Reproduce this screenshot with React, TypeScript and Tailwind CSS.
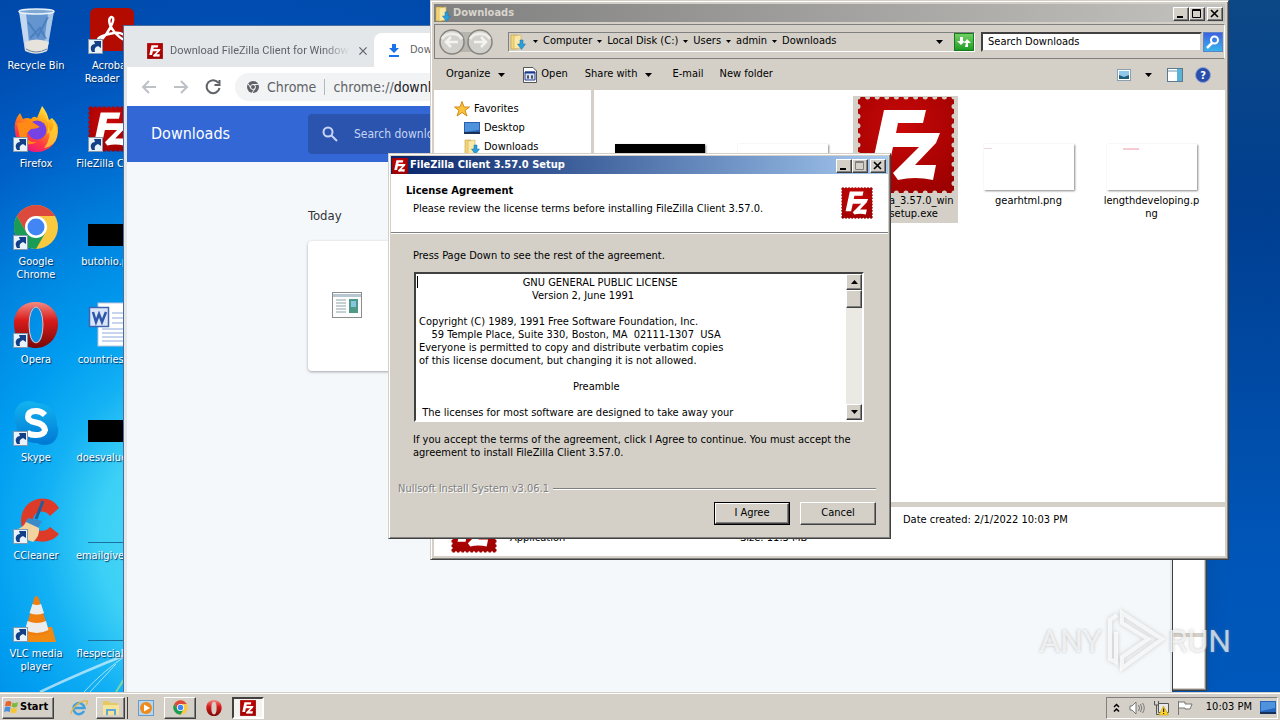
import React, { FC, ReactNode } from 'react';

const raised =
  'border border-t-white border-l-white border-r-[#404040] border-b-[#404040] shadow-[inset_-1px_-1px_0_#808080] bg-[#d4d0c8]';
const frame =
  'border border-t-[#d4d0c8] border-l-[#d4d0c8] border-r-[#404040] border-b-[#404040] shadow-[inset_1px_1px_0_#ffffff,inset_-1px_-1px_0_#808080] bg-[#d4d0c8]';

const FzIcon: FC<{ className: string }> = ({ className }) => (
  <svg viewBox="0 0 98 98" className={className}>
    <defs>
      <radialGradient id="fz" cx="0.45" cy="0.3" r="0.8">
        <stop offset="0" stopColor="#c90808" />
        <stop offset="1" stopColor="#9c0000" />
      </radialGradient>
    </defs>
    <rect x="1" y="1" width="96" height="96" fill="url(#fz)" />
    <rect x="1" y="1" width="96" height="96" fill="none" stroke="currentColor" strokeWidth="5" strokeLinecap="round" strokeDasharray="0 9.600" />
    <path
      d="M27 14H69L66 27H41L39 37H83L79 47L58 69H79L76 84Q58 80 41 84L36 77L62 51H36L31 74H14Z"
      fill="#fff"
    />
  </svg>
);

const ShortcutArrow: FC = () => (
  <svg viewBox="0 0 15 15" className="absolute bottom-0 left-0 size-[15px]">
    <rect x="0.5" y="0.5" width="14" height="14" fill="#e8f2fb" stroke="#8398ad" />
    <path d="M4 13C1 8 4 5 7 5L6 2L13 2V9L10 7C7 8 6 10 7 13Z" fill="#123f85" />
  </svg>
);

const RecycleBin: FC = () => (
  <svg viewBox="0 0 46 46" className="size-[46px]">
    <path d="M6 3L12 43Q23 49 34 43L41 3Z" fill="#a9c7e6" fillOpacity="0.6" />
    <path d="M6 3L12 43L17 44L13 5Z" fill="#dbe9f7" fillOpacity="0.8" />
    <path d="M41 3L34 43L30 44L35 5Z" fill="#dbe9f7" fillOpacity="0.6" />
    <path d="M15 14L25 28L35 9M17 30L27 20L33 31" stroke="#3e78b8" strokeWidth="2" fill="none" opacity="0.7" />
    <path d="M12 34Q23 29 36 34L34 43Q23 48 13 43Z" fill="#e6e3dc" />
    <path d="M13 41Q23 47 34 41" stroke="#6c86a3" fill="none" />
    <ellipse cx="23.500" cy="3.500" rx="17.500" ry="2.500" fill="#7fa8d3" stroke="#e8f1fa" strokeWidth="1.500" />
  </svg>
);

const AcrobatIcon: FC = () => (
  <svg viewBox="0 0 46 46" className="size-[46px]">
    <rect x="2" width="44" height="43" rx="6" fill="#b30b00" />
    <path
      d="M11 32C7 30 18 26 26 25S39 28 38 31S27 27 23 19S23 7 25 10S19 26 15 30S10 34 11 32Z"
      fill="none"
      stroke="#fff"
      strokeWidth="2.500"
    />
  </svg>
);

const FirefoxIcon: FC = () => (
  <svg viewBox="0 0 46 46" className="size-[46px]">
    <defs>
      <linearGradient id="ff" x1="0.8" y1="0" x2="0.3" y2="1">
        <stop offset="0" stopColor="#fff44f" />
        <stop offset="0.4" stopColor="#ff980e" />
        <stop offset="0.75" stopColor="#ff3647" />
        <stop offset="1" stopColor="#e31587" />
      </linearGradient>
    </defs>
    <path
      d="M2 25C1 17 3 12 7 7L10 13Q14 11 18 13Q21 9 24 12Q26 7 29 0Q34 6 36 14L39 12Q46 18 45 26C44 38 35 46 24 46S3 38 2 25Z"
      fill="url(#ff)"
    />
    <circle cx="24" cy="24" r="9.500" fill="#7542e5" />
    <path d="M4 17Q11 17 16 14L27 21Q23 23 18 23L14 27Q12 37 24 36Q12 42 7 32Z" fill="#ff8a16" />
    <path d="M29 0Q39 14 34 28Q44 22 39 12Q46 22 44 31Q42 40 31 42Q39 32 36 19Z" fill="#ffd83d" opacity="0.75" />
  </svg>
);

const ChromeIcon: FC<{ className: string }> = ({ className }) => (
  <svg viewBox="0 0 46 46" className={className}>
    <circle cx="23" cy="23" r="22" fill="#f9c940" />
    <path d="M3.900 12A22 22 0 0 1 42 12H23L13.500 28.500Z" fill="#dc4a3d" />
    <path d="M3.900 12A22 22 0 0 0 23 45L32.500 28.500H13.500Z" fill="#1a9c56" />
    <circle cx="23" cy="23" r="11" fill="#fff" />
    <circle cx="23" cy="23" r="8.500" fill="#4285f4" />
  </svg>
);

const OperaIcon: FC<{ className: string }> = ({ className }) => (
  <svg viewBox="0 0 46 46" className={className}>
    <defs>
      <linearGradient id="op" x1="0" y1="0" x2="0" y2="1">
        <stop offset="0" stopColor="#f28b82" />
        <stop offset="0.4" stopColor="#d81c1c" />
        <stop offset="1" stopColor="#7a0606" />
      </linearGradient>
    </defs>
    <path d="M23 0C36 0 45 9 45 22S36 46 23 46S1 36 1 22S10 0 23 0ZM23 5C17 5 16 13 16 23S17 41 23 41S30 33 30 23S29 5 23 5Z" fill="url(#op)" fillRule="evenodd" />
    <ellipse cx="23" cy="23" rx="7" ry="18" fill="none" stroke="#f5b8b0" />
  </svg>
);

const SkypeIcon: FC = () => (
  <svg viewBox="0 0 46 46" className="size-[46px]">
    <defs>
      <linearGradient id="sk" x1="0" y1="0" x2="0" y2="1">
        <stop offset="0" stopColor="#12b4f0" />
        <stop offset="1" stopColor="#0078d4" />
      </linearGradient>
    </defs>
    <path d="M15 1Q20 1 24 3Q44 5 44 25Q46 29 45 33Q43 45 31 45Q27 45 24 43Q4 43 3 24Q0 18 2 11Q6 1 15 1Z" fill="url(#sk)" />
    <path d="M32 15Q28 11 23 11Q15 11 15 17Q15 21 23 22.500T32 30Q31 35 23 35T14 31" stroke="#fff" strokeWidth="6" fill="none" />
  </svg>
);

const CCleanerIcon: FC = () => (
  <svg viewBox="0 0 46 46" className="size-[46px]">
    <path d="M46 10L37 18C31 10 20 13 20 23S31 36 37 29L46 36C36 49 8 46 8 23S36 -7 46 10Z" fill="#dd3b28" />
    <path d="M30 3L23 21" stroke="#1e5f9c" strokeWidth="3" />
    <path d="M15 20L29 23L25 30L12 25Z" fill="#3a8ac8" />
    <path d="M13 24L26 30Q27 38 20 44Q8 40 2 32Q10 30 13 24Z" fill="#f2d3a0" />
  </svg>
);

const VlcIcon: FC = () => (
  <svg viewBox="0 0 46 46" className="size-[46px]">
    <path d="M8 31H39L43 46H8Z" fill="#f08a12" />
    <path d="M23 0Q25 0 26 3L36 36Q23 43 12 36L21 3Q22 0 23 0Z" fill="#f07f10" />
    <path d="M19.500 8Q24 10 28 8L31 17Q24 20 16.500 17Z" fill="#ececec" />
    <path d="M14.500 25Q24 29 33 25L35.500 34Q24 40 12 34Z" fill="#ececec" />
  </svg>
);

const WordIcon: FC = () => (
  <svg viewBox="0 0 46 46" className="size-[46px]">
    <rect x="10" y="1" width="34" height="43" fill="#fff" stroke="#b9c6dd" />
    <path d="M24 11H42M24 16H42M24 21H42M14 27H42M14 31H42M14 35H42M14 39H42" stroke="#8fa9dc" />
    <rect x="1.500" y="5.500" width="19" height="19" fill="#dbe6f8" stroke="#3e66b0" strokeWidth="1.500" />
    <path d="M5 10L8 20L11 12L14 20L18 10" stroke="#2b58aa" strokeWidth="2.500" fill="none" />
  </svg>
);

const BlackThumb: FC = () => <div className="mb-1 h-[22px] w-[46px] bg-black" />;
const LineThumb: FC = () => <div className="mb-px h-px w-[46px] bg-[#1d6f9c]" />;

const desktopItems: { label: string; icon: ReactNode; shortcut?: boolean }[] = [
  { label: 'Recycle Bin', icon: <RecycleBin /> },
  { label: 'Firefox', icon: <FirefoxIcon />, shortcut: true },
  { label: 'Google Chrome', icon: <ChromeIcon className="size-[46px]" />, shortcut: true },
  { label: 'Opera', icon: <OperaIcon className="size-[46px]" />, shortcut: true },
  { label: 'Skype', icon: <SkypeIcon />, shortcut: true },
  { label: 'CCleaner', icon: <CCleanerIcon />, shortcut: true },
  { label: 'VLC media player', icon: <VlcIcon />, shortcut: true },
  { label: 'Acrobat Reader DC', icon: <AcrobatIcon />, shortcut: true },
  { label: 'FileZilla Client', icon: <FzIcon className="size-[46px] text-[#0a55bb]" />, shortcut: true },
  { label: 'butohio.png', icon: <BlackThumb /> },
  { label: 'countrieso.rtf', icon: <WordIcon /> },
  { label: 'doesvalue.jpg', icon: <BlackThumb /> },
  { label: 'emailgive.png', icon: <LineThumb /> },
  { label: 'flespecial.png', icon: <LineThumb /> }
];

const Desktop: FC = () => (
  <ul className="absolute top-2 left-0 grid grid-flow-col grid-cols-[72px_78px] grid-rows-[repeat(7,98px)] text-center text-white">
    {desktopItems.map((item) => (
      <li key={item.label} className="flex flex-col items-center px-1">
        <div className="relative flex h-[46px] w-[46px] items-end">
          {item.icon}
          {item.shortcut && <ShortcutArrow />}
        </div>
        <span className="mt-[5px] leading-[13px] [text-shadow:1px_1px_1px_#003060]">{item.label}</span>
      </li>
    ))}
  </ul>
);

const Arrow: FC<{ d: string; className?: string }> = ({ d, className = 'size-5 text-[#5f6368]' }) => (
  <svg viewBox="0 0 20 20" className={className} fill="none" stroke="currentColor" strokeWidth="2">
    <path d={d} />
  </svg>
);

const ChromeWindow: FC = () => (
  <section className="absolute top-[25px] bottom-0 left-[123px] flex w-[1050px] flex-col border-t border-r border-l border-[#4a6f9f] border-r-[#404040] bg-[#e4e7ea] pr-[2px] pl-[3px] text-[#5f6368]">
    <div className="flex h-[41px] items-end">
      <div className="flex h-8 w-[247px] items-center gap-[7px] pl-5">
        <FzIcon className="size-4 shrink-0 text-[#a00]" />
        <span className="w-[180px] font-[Roboto] whitespace-nowrap [mask-image:linear-gradient(90deg,#000_85%,transparent)]">
          Download FileZilla Client for Windows
        </span>
        <button aria-label="Close tab">
          <Arrow d="M4 4L16 16M16 4L4 16" className="size-3 text-[#5f6368]" />
        </button>
      </div>
      <div className="flex h-[34px] w-60 items-center gap-2 rounded-t-lg bg-white pl-3">
        <svg viewBox="0 0 16 16" className="size-4">
          <path d="M6 2H10V6H13L8 11L3 6H6ZM3 13H13V15H3Z" fill="#1a73e8" />
        </svg>
        <span>Downloads</span>
      </div>
    </div>
    <div className="flex h-[39px] items-center bg-white pl-3">
      <button aria-label="Back" className="mr-3">
        <Arrow d="M17 10H4M10 4L4 10L10 16" className="size-5 text-[#bdc1c6]" />
      </button>
      <button aria-label="Forward" className="mr-3">
        <Arrow d="M3 10H16M10 4L16 10L10 16" className="size-5 text-[#bdc1c6]" />
      </button>
      <button aria-label="Reload" className="mr-3">
        <Arrow d="M15.500 6A6.500 6.500 0 1 0 16.500 11M16.500 3V8H11.500" />
      </button>
      <div className="flex h-7 flex-1 items-center rounded-full bg-[#f1f3f4] pl-3 text-sm">
        <svg viewBox="0 0 24 24" className="mr-2 size-3">
          <circle cx="12" cy="12" r="12" fill="#5f6368" />
          <circle cx="12" cy="12" r="5" fill="none" stroke="#f1f3f4" strokeWidth="2" />
          <path d="M12 7H23M8 15L2 5M16 15L10 24" stroke="#f1f3f4" strokeWidth="2" />
        </svg>
        <span>Chrome</span>
        <span className="mx-2 h-4 w-px bg-[#b4b8bc]" />
        <span>
          chrome://<span className="text-[#202124]">downloads</span>
        </span>
      </div>
    </div>
    <header className="flex h-14 items-center bg-[#3367d6] pl-6 text-white">
      <h1 className="w-[157px] text-base font-normal">Downloads</h1>
      <label className="flex h-10 flex-1 items-center gap-[14px] rounded-sm bg-[#2a54ae] pl-3">
        <svg viewBox="0 0 20 20" className="size-5" fill="none" stroke="#c7d5f3" strokeWidth="2">
          <circle cx="8" cy="8" r="4.500" />
          <path d="M11.500 11.500L17 17" />
        </svg>
        <input aria-label="Search downloads" placeholder="Search downloads" className="bg-transparent text-xs outline-none placeholder:text-[#c7d5f3]" />
      </label>
    </header>
    <main className="flex-1 bg-[#f5f8fb] pt-[45px] pl-[181px]">
      <h2 className="text-[13px] leading-[18px] font-normal text-[#303438]">Today</h2>
      <div className="mt-4 h-[130px] w-[680px] rounded-sm bg-white pt-[51px] pl-6 shadow-[0_1px_3px_#a0a5aa]">
        <svg viewBox="0 0 30 26" className="h-[26px] w-[30px]">
          <rect x="0.500" y="0.500" width="29" height="25" fill="#fdfdfd" stroke="#8c8c8c" />
          <path d="M1 3.500H29" stroke="#b8c7cf" strokeWidth="3" />
          <path d="M4 8H14M4 11H14M4 14H14M4 17H14M4 20H14" stroke="#8da2a8" />
          <rect x="17" y="7" width="9" height="14" fill="#4e9a86" />
          <path d="M19 9H24V15H19Z" fill="#88c5e3" />
        </svg>
      </div>
    </main>
  </section>
);

const WindowButtons: FC<{ disabled?: boolean }> = ({ disabled }) => (
  <div className="ml-auto flex pr-[2px]">
    <button aria-label="Minimize" className={`h-[14px] w-4 ${raised}`}>
      <svg viewBox="0 0 14 12" className="h-3 w-[14px]"><path d="M3 8H9V10H3Z" /></svg>
    </button>
    <button aria-label="Maximize" disabled={disabled} className={`mr-[2px] h-[14px] w-4 ${raised}`}>
      <svg viewBox="0 0 14 12" className="h-3 w-[14px]" fill="none" stroke={disabled ? '#808080' : '#000'}>
        <path d="M2.500 1.500H10.500V9.500H2.500ZM2.500 2.500H10.500" />
      </svg>
    </button>
    <button aria-label="Close" className={`h-[14px] w-4 ${raised}`}>
      <svg viewBox="0 0 14 12" className="h-3 w-[14px]" stroke="#000" strokeWidth="1.600">
        <path d="M3 2L10 9M10 2L3 9" />
      </svg>
    </button>
  </div>
);

const FolderIcon: FC<{ className?: string }> = ({ className = 'size-4' }) => (
  <svg viewBox="0 0 16 16" className={className}>
    <path d="M1 1H7V15H1Z" fill="#f3d67a" stroke="#c39b3a" strokeWidth="0.600" />
    <path d="M4 2L11 1V14L4 15Z" fill="#fae9a6" stroke="#cfae55" strokeWidth="0.600" />
    <path d="M10 6H13V10H15.500L11.500 15.500L7.500 10H10Z" fill="#2b9fd9" stroke="#1773ab" strokeWidth="0.500" />
  </svg>
);

const Caret: FC = () => (
  <svg viewBox="0 0 7 4" className="h-1 w-[7px]"><path d="M0 0H7L3.500 4Z" /></svg>
);

const crumbs = ['Computer', 'Local Disk (C:)', 'Users', 'admin', 'Downloads'];

const files: { name: string; icon: ReactNode; selected?: boolean }[] = [
  { name: '', icon: <div className="mb-1 h-[46px] w-[90px] bg-black shadow-[1px_1px_2px_#888]" /> },
  { name: '', icon: <div className="mb-1 h-[46px] w-[90px] bg-white shadow-[1px_1px_2px_#888]" /> },
  { name: 'FileZilla_3.57.0_win\n64-setup.exe', icon: <FzIcon className="size-[98px] text-[#d4d0c8]" />, selected: true },
  {
    name: 'gearhtml.png',
    icon: <div className="mb-1 h-[46px] w-[90px] bg-white pt-1 shadow-[1px_1px_2px_#888]"><div className="h-px w-2 bg-[#f2d5d8]" /></div>
  },
  {
    name: 'lengthdeveloping.p\nng',
    icon: <div className="mb-1 h-[46px] w-[90px] bg-white pt-1 pl-4 shadow-[1px_1px_2px_#888]"><div className="h-[2px] w-4 bg-[#f4ccd2]" /></div>
  }
];

const ExplorerWindow: FC = () => (
  <section className={`absolute top-0 left-[430px] flex h-[560px] w-[799px] flex-col p-[3px] ${frame}`}>
    <div className="flex h-[18px] shrink-0 items-center gap-[2px] bg-linear-to-r from-[#808080] to-[#c4c2be] pt-px pl-px font-bold text-[#d8d4cc]">
      <FolderIcon />
      <span>Downloads</span>
      <WindowButtons />
    </div>
    <nav className="mt-[2px] flex h-[35px] shrink-0 items-center border border-t-[#808080] border-r-white border-b-[#808080] border-l-[#808080] pr-px pl-[3px]">
      <svg viewBox="0 0 56 28" className="h-7 w-14">
        <path d="M14 4H42V24H14Z" fill="#b8b5ae" />
        {[14, 42].map((cx) => (
          <circle key={cx} cx={cx} cy="14" r="12" fill="#d2d0cb" stroke="#868480" strokeWidth="1.500" />
        ))}
        <path d="M4 11A11 9 0 0 1 24 11M32 11A11 9 0 0 1 52 11" stroke="#eeede9" strokeWidth="3" fill="none" />
        <path d="M20 14H9M13 9L8 14L13 19M36 14H47M43 9L48 14L43 19" stroke="#f4f3f0" strokeWidth="2.500" fill="none" />
      </svg>
      <div className="ml-[14px] flex h-5 flex-1 items-center border border-t-[#808080] border-r-white border-b-white border-l-[#808080] pl-px">
        <FolderIcon />
        <ol className="flex pl-[2px]">
          {crumbs.map((crumb) => (
            <li key={crumb} className="flex items-center">
              <span className="mx-[5px]"><svg viewBox="0 0 5 3" className="h-[3px] w-[5px]"><path d="M0 0H5L2.500 3Z" /></svg></span>
              <button>{crumb}</button>
            </li>
          ))}
        </ol>
        <button aria-label="Previous locations" className="mr-[11px] ml-auto"><Caret /></button>
        <button aria-label="Refresh" className="grid h-[18px] w-5 place-items-center border border-[#187a1c] bg-linear-to-b from-[#6fcf62] to-[#1b9d24]">
          <svg viewBox="0 0 18 16" className="h-4 w-[18px]" fill="#fff">
            <path d="M5 3H8V7H10L6 11L2 7H5ZM10 13H13V9H16L12 5L9 9H11Z" />
          </svg>
        </button>
      </div>
      <input
        aria-label="Search Downloads"
        placeholder="Search Downloads"
        className="ml-[6px] h-5 w-[221px] border-2 border-t-[#404040] border-r-[#d4d0c8] border-b-[#d4d0c8] border-l-[#404040] bg-white pl-[5px] outline-none placeholder:text-black"
      />
      <button aria-label="Search" className="ml-px grid size-5 place-items-center border border-[#5c82c8] bg-linear-to-b from-[#3f5fe0] to-[#37b3ec]">
        <svg viewBox="0 0 16 16" className="size-4" fill="none" stroke="#fff" strokeWidth="2">
          <circle cx="9.500" cy="6" r="3.500" />
          <path d="M7 9L2 14" strokeWidth="2.500" />
        </svg>
      </button>
    </nav>
    <div className="flex h-[31px] shrink-0 items-center pr-[14px] pl-3">
      <button className="mr-[18px] flex items-center gap-2">Organize <Caret /></button>
      <button className="mr-[17px] flex items-center gap-1">
        <svg viewBox="0 0 14 16" className="h-4 w-[14px]">
          <path d="M0.500 0.500H10L13.500 4V15.500H0.500Z" fill="#fff" stroke="#555" />
          <path d="M2 5H12V13H2Z" fill="#d8e2f8" stroke="#1d3a8a" strokeWidth="1" />
          <path d="M2 5.500H12" stroke="#1d3a8a" strokeWidth="2" />
          <path d="M4 10H6M8 10H10M5 8V12M9 8V12" stroke="#222" />
        </svg>
        Open
      </button>
      <button className="mr-5 flex items-center gap-2">Share with <Caret /></button>
      <button className="mr-4">E-mail</button>
      <button>New folder</button>
      <button aria-label="Change view" className="ml-auto flex items-center gap-[14px]">
        <svg viewBox="0 0 14 12" className="h-3 w-[14px]">
          <rect x="0.500" y="0.500" width="13" height="11" fill="#fff" stroke="#8aa0b0" />
          <path d="M2 2H12V10H2Z" fill="#8fc8ea" />
          <path d="M2 6L7 8L12 6V10H2Z" fill="#205d78" />
        </svg>
        <Caret />
      </button>
      <button aria-label="Show the preview pane" className="ml-[15px]">
        <svg viewBox="0 0 16 14" className="h-[14px] w-4">
          <rect x="0.500" y="0.500" width="15" height="13" fill="#fff" stroke="#5b7a90" />
          <path d="M1 3H15" stroke="#9db7c8" strokeWidth="1.500" />
          <rect x="10" y="1" width="5" height="12" fill="#59b3d8" />
        </svg>
      </button>
      <button aria-label="Get help" className="ml-3 grid size-4 place-items-center rounded-full border border-[#8fa5d8] bg-[#2a4fa8] font-bold text-white">
        ?
      </button>
    </div>
    <div className="flex min-h-0 flex-1">
      <ul className="w-[157px] shrink-0 bg-white pt-[9px] pl-5 leading-[19px]">
        <li className="flex items-center gap-1">
          <svg viewBox="0 0 16 16" className="size-4">
            <path d="M8 0.500L10 6H15.500L11 9.500L13 15L8 11.500L3 15L5 9.500L0.500 6H6Z" fill="#fbc23c" stroke="#d38a18" />
          </svg>
          Favorites
        </li>
        <li className="flex items-center gap-1 pl-[10px]">
          <svg viewBox="0 0 16 12" className="h-3 w-4">
            <rect width="16" height="12" fill="#2b5fae" />
            <path d="M1 1H15V8L1 10Z" fill="#4d92dd" />
            <path d="M0 10H16V12H0Z" fill="#1d3158" />
          </svg>
          Desktop
        </li>
        <li className="flex items-center gap-1 pl-[10px]"><FolderIcon /> Downloads</li>
      </ul>
      <ul className="ml-[3px] grid flex-1 auto-rows-min grid-cols-[repeat(auto-fill,123px)] bg-white pt-[6px] pl-1">
        {files.map((file, i) => (
          <li key={i} className={`mx-[9px] flex flex-col items-center ${file.selected ? 'bg-[#d4d0c8]' : ''}`}>
            <div className="flex h-[98px] items-end">{file.icon}</div>
            <span className="h-[29px] text-center leading-[13px] whitespace-pre">{file.name}</span>
          </li>
        ))}
      </ul>
    </div>
    <footer className="mt-[5px] flex h-[49px] shrink-0 bg-white pl-[17px]">
      <FzIcon className="size-[46px] text-white" />
      <dl className="grid flex-1 grid-cols-[230px_163px_1fr] content-start pt-1 pl-[13px] leading-[18px]">
        <dd className="col-start-3">Date created: 2/1/2022 10:03 PM</dd>
        <dd className="col-start-1">Application</dd>
        <dd>Size: 11.3 MB</dd>
      </dl>
    </footer>
  </section>
);

const license = `${' '.repeat(33)}GNU GENERAL PUBLIC LICENSE
${' '.repeat(36)}Version 2, June 1991

Copyright (C) 1989, 1991 Free Software Foundation, Inc.
    59 Temple Place, Suite 330, Boston, MA  02111-1307  USA
Everyone is permitted to copy and distribute verbatim copies
of this license document, but changing it is not allowed.

${' '.repeat(49)}Preamble

 The licenses for most software are designed to take away your
freedom to share and change it.  By contrast, the GNU General Public`;

const SetupDialog: FC = () => (
  <section className={`absolute top-[153px] left-[388px] flex h-[386px] w-[503px] flex-col p-[2px] ${frame}`}>
    <div className="flex h-[18px] shrink-0 items-center gap-[2px] bg-linear-to-r from-[#0a246a] to-[#a6caf0] pt-px pl-px font-bold text-white">
      <FzIcon className="size-4 text-[#a00]" />
      <span>FileZilla Client 3.57.0 Setup</span>
      <WindowButtons disabled />
    </div>
    <header className="flex h-[59px] shrink-0 items-center justify-between border-b border-[#808080] bg-white px-[15px]">
      <div className="-mt-[6px]">
        <h2 className="leading-[18px] font-bold">License Agreement</h2>
        <p className="pl-[7px] leading-[18px]">Please review the license terms before installing FileZilla Client 3.57.0.</p>
      </div>
      <FzIcon className="size-8 text-white" />
    </header>
    <div className="flex-1 border-t border-white pr-[24px] pl-[22px]">
      <label htmlFor="license" className="mt-[15px] block leading-[14px]">Press Page Down to see the rest of the agreement.</label>
      <div className="relative mt-[9px] ml-px flex h-[150px] border-2 border-t-[#404040] border-r-white border-b-white border-l-[#404040] bg-white">
        <textarea
          id="license"
          readOnly
          wrap="off"
          value={license}
          className="flex-1 resize-none overflow-hidden pt-[2px] pl-[3px] leading-[13px] outline-none"
        />
        <span className="absolute top-[2px] left-px h-3 w-px bg-black" />
        <div className="flex w-4 flex-col bg-[#ebe9e4]">
          <button aria-label="Scroll up" className={`grid h-4 place-items-center ${raised}`}>
            <svg viewBox="0 0 7 4" className="h-1 w-[7px]"><path d="M0 4H7L3.500 0Z" /></svg>
          </button>
          <div className={`h-[18px] ${raised}`} />
          <button aria-label="Scroll down" className={`mt-auto grid h-4 place-items-center ${raised}`}><Caret /></button>
        </div>
      </div>
      <p className="mt-[11px] leading-[13px]">
        If you accept the terms of the agreement, click I Agree to continue. You must accept the agreement to install FileZilla
        Client 3.57.0.
      </p>
    </div>
    <footer className="shrink-0 pr-3 pb-[11px] pl-[7px]">
      <div className="flex items-center gap-1 leading-[14px] text-[#808080] [text-shadow:1px_1px_0_#fff]">
        Nullsoft Install System v3.06.1
        <span className="h-[2px] flex-1 border-t border-b border-t-[#808080] border-b-white" />
      </div>
      <div className="mt-[6px] flex justify-end gap-[10px]">
        <button className="border border-black">
          <span className={`grid h-[21px] w-[74px] place-items-center ${raised}`}>I Agree</span>
        </button>
        <button className={`h-[23px] w-[76px] ${raised}`}>Cancel</button>
      </div>
    </footer>
  </section>
);

const Watermark: FC = () => (
  <div className="absolute right-[49px] bottom-[18px] z-10 flex items-center font-[Roboto] text-[32px] leading-none text-white/70 [text-shadow:0_0_3px_#8888]">
    ANY
    <svg viewBox="0 0 62 66" className="mx-[2px] h-[66px] w-[62px] drop-shadow-[0_0_2px_#8888]" fill="none" stroke="#fff" strokeOpacity="0.75" strokeWidth="4">
      <path d="M18 5L58 31L18 60V49L44 31L18 15Z" />
      <path d="M13 7L6 12V51L12 54V24" />
    </svg>
    RUN
  </div>
);

const Taskbar: FC = () => (
  <footer className="z-20 flex h-7 shrink-0 items-center border-t border-[#d4d0c8] bg-[#d4d0c8] px-[2px] shadow-[inset_0_1px_0_#fff]">
    <button className={`mt-[2px] flex h-[22px] w-[52px] items-center gap-px pl-px text-[11px] font-bold ${raised}`}>
      <svg viewBox="0 0 16 16" className="size-[15px] shrink-0">
        <path d="M2 2Q5 0 8 2L7 7Q4 5 1 7Z" fill="#e8632a" />
        <path d="M9 3Q12 4 15 2L14 7Q11 9 8 7Z" fill="#7cba3c" />
        <path d="M1 8Q4 6 7 8L6 13Q3 11 0 13Z" fill="#4a8fdc" />
        <path d="M8 8Q11 10 14 8L13 13Q10 15 7 13Z" fill="#f7c531" />
      </svg>
      Start
    </button>
    <button aria-label="Internet Explorer" className="mt-[2px] ml-4">
      <svg viewBox="0 0 18 18" className="size-[18px]" fill="none">
        <path d="M14 12A5.500 5.500 0 1 1 14.500 9H5" stroke="#3fa0e0" strokeWidth="2.500" />
        <path d="M1 15C2 8 11 1 17 2C18 3 17 5 16 6" stroke="#e3b73c" strokeWidth="1.300" />
      </svg>
    </button>
    <button aria-label="Windows Explorer" className={`mt-[2px] ml-2 grid h-[22px] w-[29px] place-items-center ${raised}`}>
      <svg viewBox="0 0 18 16" className="h-4 w-[18px]">
        <path d="M1 1H7L9 3H16V14H1Z" fill="#e5c964" />
        <path d="M1 5H17V15H1Z" fill="#f6e49a" />
        <path d="M4 15V9H14V15H12V11H6V15Z" fill="#5fa9d6" />
      </svg>
    </button>
    <span className="mt-[2px] h-[22px] w-[3px] border-r border-[#404040] bg-[#d4d0c8]" />
    <button aria-label="Windows Media Player" className="mt-[2px] ml-[10px]">
      <svg viewBox="0 0 16 16" className="size-4">
        <rect x="0.500" y="0.500" width="15" height="15" fill="#b6d6ef" stroke="#6b9cc4" />
        <circle cx="8" cy="8" r="6" fill="#ef8a1a" />
        <path d="M6 4.500L12 8L6 11.500Z" fill="#fff" />
      </svg>
    </button>
    <button aria-label="Google Chrome" className={`mt-[2px] ml-[10px] grid h-[22px] w-8 place-items-center ${raised}`}>
      <ChromeIcon className="size-[15px]" />
    </button>
    <button aria-label="Opera" className="mt-[2px] ml-[10px]"><OperaIcon className="size-4" /></button>
    <button
      aria-label="FileZilla Client 3.57.0 Setup"
      className="mt-[2px] ml-[10px] grid h-[22px] w-8 place-items-center border-2 border-t-[#404040] border-r-white border-b-white border-l-[#404040] bg-[#f4f3f0]"
    >
      <FzIcon className="size-4 text-[#a00]" />
    </button>
    <div className="mt-[2px] ml-auto flex h-[22px] items-center border border-t-[#808080] border-r-white border-b-white border-l-[#808080] pr-px pl-[6px]">
      <button aria-label="Show hidden icons">
        <svg viewBox="0 0 7 10" className="h-[10px] w-[7px]" fill="none" stroke="#000" strokeWidth="1.500">
          <path d="M1 4L3.500 1.500L6 4M1 8.500L3.500 6L6 8.500" />
        </svg>
      </button>
      <svg viewBox="0 0 16 14" className="ml-[9px] h-[14px] w-4" fill="#fff" stroke="#777">
        <path d="M1 5H3L7 1V13L3 9H1Z" />
        <path d="M9.500 4Q11.500 7 9.500 10M11.500 3Q14 7 11.500 11M13.500 2Q17 7 13.500 12" fill="none" />
      </svg>
      <svg viewBox="0 0 16 16" className="ml-2 size-4">
        <path d="M5.500 3.500H15.500V12.500H5.500Z" fill="#e8e8e8" stroke="#555" />
        <path d="M1.500 1V5H5.500V1M3.500 5V14.500H8" fill="none" stroke="#555" />
        <path d="M10.500 6L15.500 15H6Z" fill="#ffd52c" stroke="#c79b00" strokeWidth="0.600" />
        <path d="M10.700 8.500V12M10.700 13V14" stroke="#000" />
      </svg>
      <svg viewBox="0 0 16 16" className="ml-2 size-4" fill="#fff" stroke="#777">
        <path d="M1.500 1V15M1.500 2H8V4H15L13 9H8V8H2" />
      </svg>
      <time className="ml-[13px]">10:03 PM</time>
      <svg viewBox="0 0 16 13" className="ml-2 h-[13px] w-4">
        <rect width="16" height="13" fill="#2564b8" />
        <path d="M1 1H15V7L1 10Z" fill="#4f93dd" />
        <path d="M0 11H16V13H0Z" fill="#16305c" />
      </svg>
    </div>
  </footer>
);

const App: FC = () => (
  <div className="flex h-screen flex-col overflow-hidden bg-[#004ca8] font-['DejaVu_Sans_Condensed','DejaVu_Sans',sans-serif] text-[11px] text-black">
    <div className="relative min-h-0 flex-1 overflow-hidden bg-[radial-gradient(circle_at_230px_540px,#5ce0f8_0,#3cd0f6_130px,#12b0f4_190px,#009cf0_250px,#0084e0_330px,#0060c8_430px,#004cb0_530px,#0047a4_640px,#004494_900px,transparent_1000px),linear-gradient(180deg,#0c4886_0,#003e90_30%,#0056b8_80%,#0058bc_100%)]">
      <svg viewBox="0 0 100 60" className="absolute bottom-0 left-8 h-[60px] w-[100px]" fill="none" stroke="#fff" strokeOpacity="0.6">
        <path d="M8 60Q50 40 96 22" strokeWidth="2.500" />
        <path d="M52 60Q70 40 96 22M58 60L84 32" />
        <path d="M84 60L94 44" stroke="#b6f07c" strokeWidth="2" />
      </svg>
      <Desktop />
      <div className={`absolute right-[73px] bottom-px flex h-[300px] w-[300px] flex-col p-[2px] ${frame}`}>
        <div className="flex-1 bg-white" />
        <div className="mt-1 h-[51px] bg-white" />
      </div>
      <ChromeWindow />
      <ExplorerWindow />
      <SetupDialog />
      <Watermark />
    </div>
    <Taskbar />
  </div>
);

export default App;
